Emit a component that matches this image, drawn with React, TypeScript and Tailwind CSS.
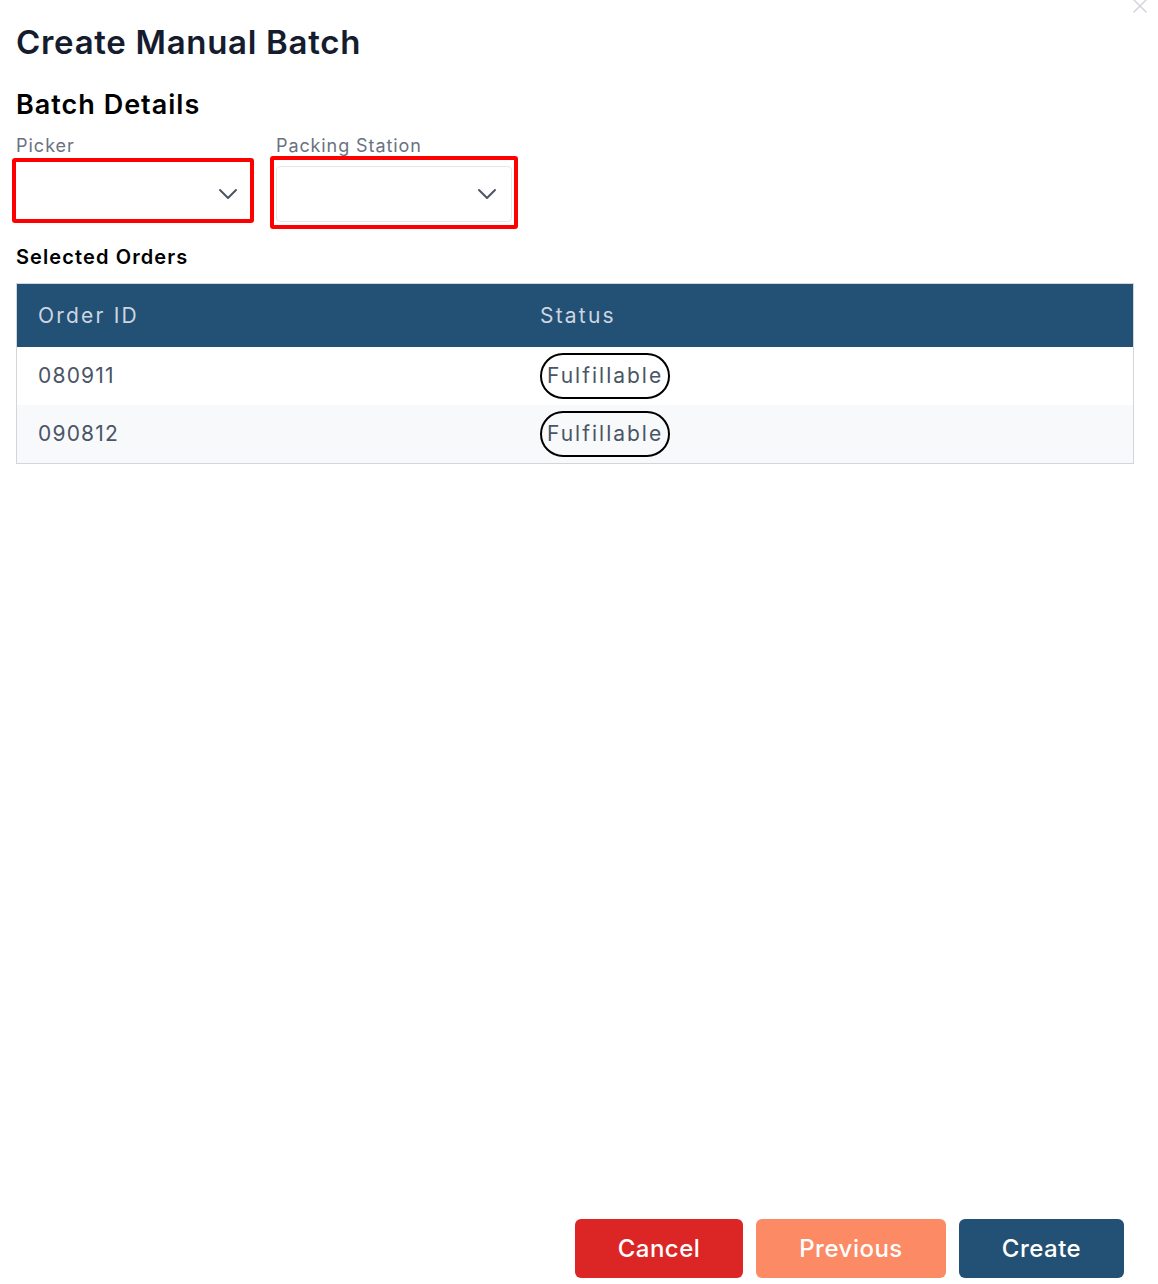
import { ChevronDown, X } from "lucide-react";

const orders = [
  { id: "080911", status: "Fulfillable" },
  { id: "090812", status: "Fulfillable" },
];

function SelectBox({ framed, width }: { framed?: boolean; width: string }) {
  return (
    <div
      className={
        framed
          ? `flex h-[56px] ${width} items-center justify-end rounded border border-gray-200 bg-white pr-[8px]`
          : `flex h-[57px] ${width} items-center justify-end bg-white pr-[6px] pt-[6px]`
      }
    >
      <ChevronDown className="h-[32px] w-[32px] text-gray-600" strokeWidth={1.5} />
    </div>
  );
}

export default function App() {
  return (
    <div
      className="relative flex min-h-[1284px] w-[1158px] flex-col bg-white px-4"
      style={{ fontFamily: "Inter, 'Noto Sans', sans-serif" }}
    >
      <X className="absolute right-[6px] top-[-6px] h-6 w-6 text-gray-300" strokeWidth={1.5} />

      <h1 className="mt-[22px] text-[33px] font-semibold leading-[40px] tracking-[0.7px] text-[#141c2e]">
        Create Manual Batch
      </h1>

      <h2 className="mt-[29px] text-[27px] font-semibold leading-[28px] tracking-[1px] text-black">
        Batch Details
      </h2>

      <div className="mt-[17px] flex gap-[22px]">
        <div className="flex flex-col">
          <label className="text-[18px] leading-[20px] tracking-[1px] text-gray-500">Picker</label>
          <div className="-ml-[4px] mt-[2px] rounded-[3px] border-4 border-[#ff0000]">
            <SelectBox width="w-[234px]" />
          </div>
        </div>
        <div className="flex flex-col">
          <label className="text-[18px] leading-[20px] tracking-[0.9px] text-gray-500">Packing Station</label>
          <div className="-ml-[6px] rounded-[3px] border-4 border-[#ff0000] pl-[2px] pr-[2px] pt-[6px] pb-[3px]">
            <SelectBox framed width="w-[236px]" />
          </div>
        </div>
      </div>

      <h3 className="mt-[16px] text-[20px] font-semibold leading-[24px] tracking-[1.1px] text-black">
        Selected Orders
      </h3>

      <div className="mt-[14px] w-[1118px] border border-gray-300">
        <div className="grid h-[63px] grid-cols-[502px_1fr] items-center bg-[#235075] px-[21px] text-[21px] tracking-[2.2px] text-[#cdd6e0]">
          <span>Order ID</span>
          <span>Status</span>
        </div>
        {orders.map((o, i) => (
          <div
            key={o.id}
            className={
              i % 2 === 0
                ? "grid h-[58px] grid-cols-[502px_1fr] items-center bg-white px-[21px] text-[21px] text-gray-600"
                : "grid h-[58px] grid-cols-[502px_1fr] items-center bg-[#f8f9fb] px-[21px] text-[21px] text-gray-600"
            }
          >
            <span className="tracking-[1.2px]">{o.id}</span>
            <span>
              <span className="inline-flex h-[46px] items-center rounded-full border-2 border-black px-[5px] tracking-[2px]">
                {o.status}
              </span>
            </span>
          </div>
        ))}
      </div>

      <div className="mt-auto mb-[6px] flex justify-end gap-[13px] pr-[18px]">
        <button className="h-[59px] w-[168px] rounded-md bg-[#dc2626] text-[24px] font-medium tracking-[0.5px] text-white">
          Cancel
        </button>
        <button className="h-[59px] w-[190px] rounded-md bg-[#fc8a64] text-[24px] font-medium tracking-[0.5px] text-white">
          Previous
        </button>
        <button className="h-[59px] w-[165px] rounded-md bg-[#235075] text-[24px] font-medium tracking-[0.5px] text-white">
          Create
        </button>
      </div>
    </div>
  );
}
